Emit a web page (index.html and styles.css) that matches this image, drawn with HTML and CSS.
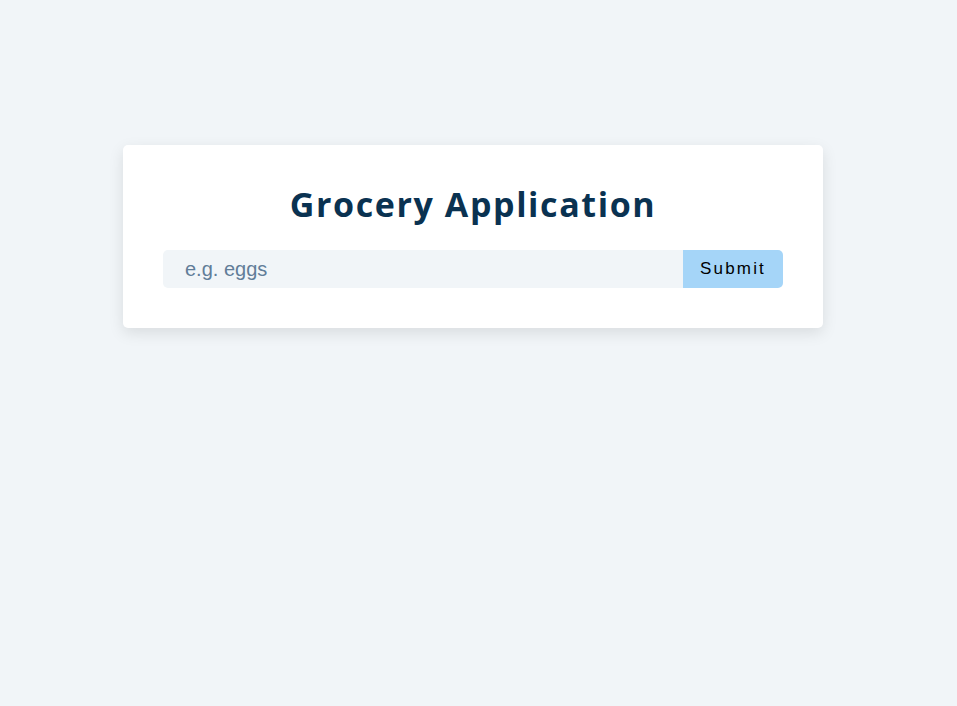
FILE: index.html
```html
<!DOCTYPE html>
<html lang="en">
<head>
<meta charset="utf-8">
<title>Grocery Application</title>
<link rel="stylesheet" href="styles.css">
</head>
<body>
<main class="page">
  <section class="card">
    <form class="grocery-form">
      <h3 class="title">Grocery Application</h3>
      <div class="form-control">
        <input type="text" class="grocery-input" placeholder="e.g. eggs">
        <button type="submit" class="submit-btn">Submit</button>
      </div>
    </form>
  </section>
</main>
</body>
</html>
```
FILE: styles.css
```css
* { box-sizing: border-box; }
html, body { margin: 0; padding: 0; }
body {
  background: #f1f5f8;
  font-family: "Liberation Sans", Arial, sans-serif;
  min-height: 706px;
}
.page {
  padding: 145px 11px 0 0;
  display: flex;
  justify-content: center;
}
.card {
  width: 700px;
  background: #ffffff;
  border-radius: 5px;
  box-shadow: 0 5px 15px rgba(0, 0, 0, 0.1);
  padding: 40px 40px 40px;
}
.grocery-form { margin: 0; }
.title {
  margin: 0 0 27px;
  text-align: center;
  color: #0a3251;
  font-family: "Open Sans", "Noto Sans", sans-serif;
  font-weight: 700;
  font-size: 34px;
  line-height: 38px;
  letter-spacing: 1.6px;
}
.form-control {
  display: flex;
  height: 38px;
}
.grocery-input {
  flex: 1 1 auto;
  min-width: 0;
  border: 0;
  outline: none;
  background: #f1f5f8;
  border-radius: 5px 0 0 5px;
  padding: 0 0 0 22px;
  font-family: "Liberation Sans", Arial, sans-serif;
  font-size: 20px;
  color: #617d98;
}
.grocery-input::placeholder { color: #617d98; opacity: 1; }
.submit-btn {
  flex: 0 0 100px;
  border: 0;
  background: #a5d5f8;
  border-radius: 0 5px 5px 0;
  font-family: "Liberation Sans", Arial, sans-serif;
  font-size: 17px;
  letter-spacing: 2.2px;
  color: #000;
  padding: 0;
  cursor: pointer;
}
```
